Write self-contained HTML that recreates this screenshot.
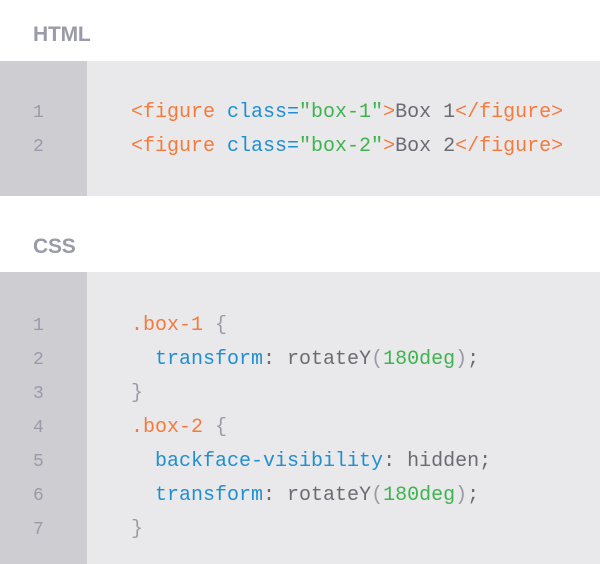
<!DOCTYPE html>
<html><head><meta charset="utf-8"><style>
body{margin:0;width:600px;height:564px;background:#fff;overflow:hidden;font-family:"Liberation Sans",sans-serif}
h2{position:absolute;left:33px;margin:0;font-size:21px;font-weight:bold;color:#9a9aa8;letter-spacing:-0.2px}
.blk{position:absolute;left:0;width:600px;background:#e9e9eb}
.g{position:absolute;left:0;top:0;bottom:0;width:87px;background:#cdcdd2}
.ln{position:absolute;left:33px;font-family:"Liberation Mono",monospace;font-size:18px;color:#9a9aa8;line-height:34px}
.code{position:absolute;left:131px;font-family:"Liberation Mono",monospace;font-size:20px;line-height:34px;white-space:pre;color:#6b6b73}
.o{color:#f57a3b}.b{color:#1f8fd1}.gr{color:#3eb34f}.p{color:#9a9aa8}
</style></head><body>
<h2 style="top:23px">HTML</h2>
<div class="blk" style="top:61px;height:135px"><div class="g"></div>
<div class="ln" style="top:35px">1<br>2</div>
<div class="code" style="top:35px"><span class="o">&lt;figure</span> <span class="b">class=</span><span class="gr">"box-1"</span><span class="o">&gt;</span>Box 1<span class="o">&lt;/figure&gt;</span>
<span class="o">&lt;figure</span> <span class="b">class=</span><span class="gr">"box-2"</span><span class="o">&gt;</span>Box 2<span class="o">&lt;/figure&gt;</span></div>
</div>
<h2 style="top:235px">CSS</h2>
<div class="blk" style="top:272px;height:292px"><div class="g"></div>
<div class="ln" style="top:37px">1<br>2<br>3<br>4<br>5<br>6<br>7</div>
<div class="code" style="top:37px"><span class="o">.box-1</span> <span class="p">{</span>
  <span class="b">transform</span>: rotateY<span class="p">(</span><span class="gr">180deg</span><span class="p">)</span>;
<span class="p">}</span>
<span class="o">.box-2</span> <span class="p">{</span>
  <span class="b">backface-visibility</span>: hidden;
  <span class="b">transform</span>: rotateY<span class="p">(</span><span class="gr">180deg</span><span class="p">)</span>;
<span class="p">}</span></div>
</div>
</body></html>
